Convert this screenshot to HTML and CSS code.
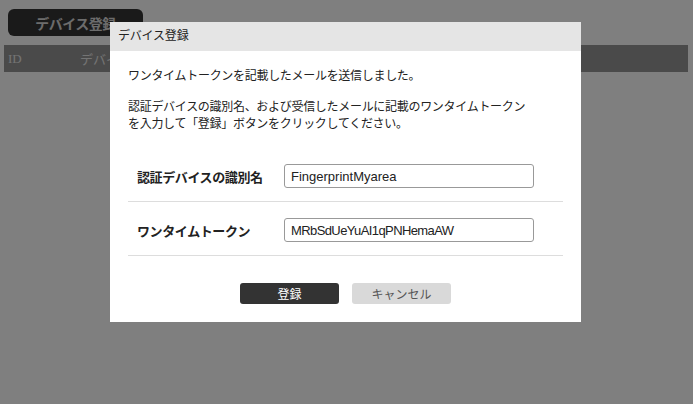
FILE: index.html
```html
<!DOCTYPE html>
<html lang="ja">
<head>
    <meta charset="UTF-8" />
    <title>デバイス登録</title>
    <link rel="stylesheet" href="styles.css">
</head>
<body>
    <div class="page">
        <button class="add-button">デバイス登録</button>
        <div class="device-table">
            <span class="col-id">ID</span>
            <span class="col-name">デバイス名</span>
        </div>
    </div>

    <div class="overlay">
        <div class="modal">
            <div class="modal-header">デバイス登録</div>
            <div class="modal-body">
                <p class="message">ワンタイムトークンを記載したメールを送信しました。</p>
                <p class="message">認証デバイスの識別名、および受信したメールに記載のワンタイムトークン<br>を入力して「登録」ボタンをクリックしてください。</p>

                <form class="form">
                    <div class="form-row">
                        <label for="deviceName">認証デバイスの識別名</label>
                        <input type="text" id="deviceName" value="FingerprintMyarea" />
                    </div>
                    <div class="form-row">
                        <label for="token">ワンタイムトークン</label>
                        <input type="text" id="token" class="token" value="MRbSdUeYuAI1qPNHemaAW" />
                    </div>
                    <div class="actions">
                        <button type="submit" class="btn btn-primary">登録</button>
                        <button type="button" class="btn btn-cancel">キャンセル</button>
                    </div>
                </form>
            </div>
        </div>
    </div>
</body>
</html>
```

FILE: styles.css
```css
:root {
    --dark: #333333;
    --header-bg: #e5e5e5;
    --line: #dddddd;
    --text: #222222;
    --white: #ffffff;
}

* {
    box-sizing: border-box;
}

body {
    margin: 0;
    font-family: 'Liberation Sans', 'Noto Sans CJK JP', sans-serif;
    color: var(--text);
    background-color: var(--white);
}

.page {
    padding: 9px 5px 0 4px;
}

.add-button {
    display: block;
    margin-left: 4px;
    width: 135px;
    height: 27px;
    border: none;
    border-radius: 6px;
    background-color: #353535;
    color: #d8d8d8;
    font-family: inherit;
    font-size: 14px;
    font-weight: bold;
    letter-spacing: -0.5px;
}

.device-table {
    display: flex;
    align-items: center;
    margin-top: 9px;
    width: 684px;
    height: 27px;
    background-color: #949494;
    color: #e8e8e8;
    font-size: 13px;
}

.col-id {
    width: 76px;
    padding-left: 4px;
    font-family: 'Liberation Serif', serif;
}

.overlay {
    position: fixed;
    inset: 0;
    background-color: rgba(0, 0, 0, 0.5);
    display: flex;
    justify-content: center;
    align-items: flex-start;
    padding-top: 22px;
}

.modal {
    width: 471px;
    background-color: var(--white);
    margin-left: -2px;
}

.modal-header {
    height: 29px;
    line-height: 29px;
    padding-left: 8px;
    background-color: var(--header-bg);
    font-size: 12px;
    letter-spacing: -0.2px;
}

.modal-body {
    padding: 17px 18px 18px;
}

.message {
    margin: 0 0 14px;
    font-size: 12px;
    line-height: 17px;
    letter-spacing: -0.3px;
}

.form {
    margin-top: 15px;
}

.form-row {
    display: flex;
    align-items: center;
    padding: 16px 0 13px 9px;
    border-bottom: 1px solid var(--line);
}

.form-row label {
    width: 147px;
    font-size: 13px;
    font-weight: bold;
    letter-spacing: -0.4px;
}

.form-row input {
    width: 250px;
    height: 24px;
    padding: 0 6px;
    border: 1px solid #999999;
    border-radius: 3px;
    font-family: inherit;
    font-size: 13px;
    color: var(--text);
}

.token {
    letter-spacing: -0.6px;
    color: #4a4a6a;
}

.actions {
    display: flex;
    justify-content: center;
    gap: 13px;
    margin-top: 27px;
}

.btn {
    width: 99px;
    height: 21px;
    border: none;
    border-radius: 3px;
    font-family: inherit;
    font-size: 12px;
    cursor: pointer;
}

.btn-primary {
    background-color: var(--dark);
    color: var(--white);
}

.btn-cancel {
    background-color: #d9d9d9;
    color: #555555;
}
```
